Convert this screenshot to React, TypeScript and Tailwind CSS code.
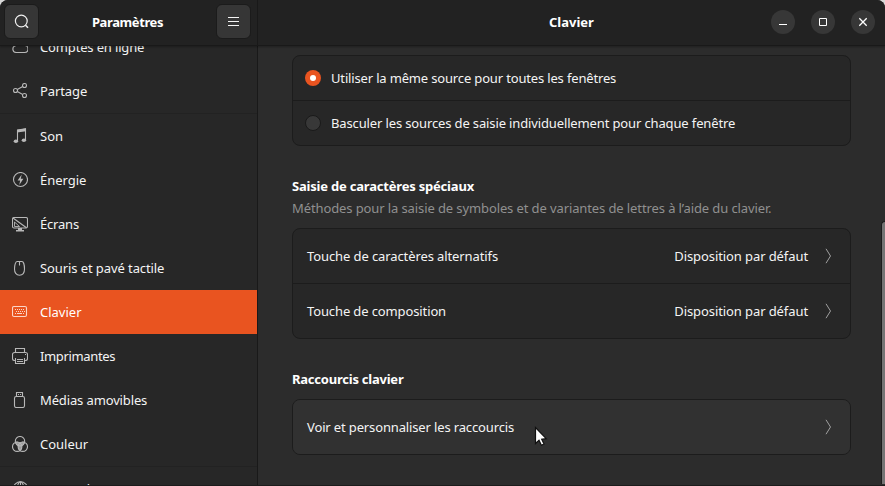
import type { ReactNode } from "react";

function Icon({ children }: { children: ReactNode }) {
  return (
    <svg width="16" height="16" viewBox="0 0 16 16" fill="none" stroke="currentColor" strokeWidth="1.100" className="shrink-0">
      {children}
    </svg>
  );
}

const cloud = <path d="M4 13.500a3.500 3.500 0 0 1-.4-6.900A4.600 4.600 0 0 1 12.500 6.500a3.500 3.500 0 0 1 0 7z" />;
const share = (
  <>
    <circle cx="3.500" cy="7.500" r="2" />
    <circle cx="12.500" cy="2.500" r="2" />
    <circle cx="12.500" cy="12.500" r="2" />
    <path d="M5.300 6.500l5.400-3M5.300 8.500l5.400 3" />
  </>
);
const music = (
  <>
    <path d="M5.500 13V2.500l8-1.500v11" />
    <path d="M5 1.500L14 .3v3L5 4.500z" fill="currentColor" stroke="none" />
    <ellipse cx="3.900" cy="13.200" rx="2.200" ry="1.800" fill="currentColor" stroke="none" />
    <ellipse cx="11.900" cy="12.200" rx="2.200" ry="1.800" fill="currentColor" stroke="none" />
  </>
);
const power = (
  <>
    <circle cx="8.500" cy="7.500" r="7" />
    <path d="M9.700 2.500L5.600 8.500h2.500l-.8 4.500 4.100-6.200H8.800z" fill="currentColor" stroke="none" />
  </>
);
const screen = (
  <>
    <rect x="0.500" y="1.500" width="15" height="10.500" rx="1.500" />
    <path d="M1 2l13.500 9.700" />
    <path d="M2.500 6v4.500h5z" strokeWidth="0.900" />
    <path d="M6 12h4v2h2v1.500H4V14h2z" fill="currentColor" stroke="none" />
  </>
);
const mouse = (
  <>
    <path d="M5 1.500h5c1.500 0 2.500 4 2.500 7.500s-1.600 6.200-5 6.200-5-2.700-5-6.200S3.500 1.500 5 1.500z" />
    <path d="M7.500 1.500v4" />
  </>
);
const keyboard = (
  <>
    <rect x="0.500" y="2.500" width="14" height="10" rx="1.500" />
    <path d="M3 5.500h1M5 5.500h1M7 5.500h1M9 5.500h1M11 5.500h1M4 7.500h1M6 7.500h1M8 7.500h1M10 7.500h1M12 7.500h1" strokeWidth="1" />
    <path d="M3 9.500h1M5 9.500h5M11 9.500h1" strokeWidth="1" />
  </>
);
const printer = (
  <>
    <path d="M3.500 4V.5h9V4M3 12.500h-.5a2 2 0 0 1-2-2V6.500a2 2 0 0 1 2-2h11a2 2 0 0 1 2 2v4a2 2 0 0 1-2 2H13" />
    <path d="M3.500 10v5.500h9V10M5 11.500h6M5 13.500h6M13 6.500h1" />
  </>
);
const usb = (
  <>
    <rect x="2.500" y="4.500" width="10" height="11" rx="1.800" />
    <path d="M4.500 4V.5h6V4" />
    <path d="M6 2.500h1M8 2.500h1" />
  </>
);
const color = (
  <>
    <g fill="currentColor" stroke="none" opacity=".8">
      <ellipse cx="6.600" cy="7.950" rx="3.550" ry="1.700" transform="rotate(27 6.600 7.950)" />
      <ellipse cx="9.400" cy="7.950" rx="3.550" ry="1.700" transform="rotate(-27 9.400 7.950)" />
      <ellipse cx="8" cy="10.700" rx="1.900" ry="3.800" />
    </g>
    <circle cx="8" cy="5.200" r="4.700" />
    <circle cx="5.200" cy="10.700" r="4.700" />
    <circle cx="10.800" cy="10.700" r="4.700" />
  </>
);
const globe = (
  <>
    <circle cx="8.500" cy="8" r="7.200" />
    <ellipse cx="8.500" cy="8" rx="3.300" ry="7.200" />
    <path d="M1.700 5h13.600M8.500 1v14M1.700 11h13.600" />
  </>
);

function Entry({ icon, label, tracking = "", active = false }: { icon: ReactNode; label: string; tracking?: string; active?: boolean }) {
  return (
    <div className={`flex h-11 shrink-0 items-center gap-3 pl-3 ${active ? "bg-[#e95420] text-white" : ""}`}>
      <span className={`flex ${active ? "text-[#fbd5c8]" : "text-[#b8b8b8]"}`}>
        <Icon>{icon}</Icon>
      </span>
      <span className={`whitespace-nowrap ${tracking}`}>{label}</span>
    </div>
  );
}

function Chevron() {
  return (
    <svg width="8" height="16" viewBox="0 0 8 16" fill="none" stroke="#a0a0a0" className="ml-[17px] shrink-0">
      <path d="M1 .8L5.500 8 1 15.200" />
    </svg>
  );
}

function Row({ label, value, tracking = "", hover = false }: { label: string; value?: string; tracking?: string; hover?: boolean }) {
  return (
    <div className={`box-content flex h-[54px] items-center pl-3.5 pr-[17px] ${hover ? "bg-[#313131]" : ""}`}>
      <span className={`whitespace-nowrap ${tracking}`}>{label}</span>
      <span className="ml-auto whitespace-nowrap tracking-[-0.09px]">{value}</span>
      <Chevron />
    </div>
  );
}

const card = "overflow-hidden rounded-lg border border-[#1c1c1c] bg-[#272727] divide-y divide-[#1c1c1c]";
const windowButton = "flex size-6 items-center justify-center rounded-full bg-[#373737]";

export default function App() {
  return (
    <div className="h-[486px] w-[885px] overflow-hidden bg-[#d8d8d8] font-['Noto_Sans',sans-serif] text-[13px] leading-5 text-[#f4f4f4]">
      <div className="relative flex h-full flex-col overflow-hidden rounded-t-lg border-b border-[#1c1c1c] bg-[#2c2c2c]">
        <header className="relative z-10 flex h-[46px] shrink-0 border-b border-[#191919] bg-[#222222] shadow-[0_1px_2px_rgba(0,0,0,0.3)]">
          <div className="flex w-[258px] items-center justify-between border-r border-[#191919] px-1 pb-0.5">
            <button className="flex size-[35px] items-center justify-center rounded-md border border-[#1b1b1b] bg-[#363636]">
              <svg width="16" height="16" viewBox="0 0 16 16" fill="none" stroke="#f0f0f0" strokeWidth="1.200">
                <circle cx="7.300" cy="7" r="5.900" />
                <path d="M11.500 11.200l2.500 2.500" strokeWidth="1.600" />
              </svg>
            </button>
            <h1 className="font-bold tracking-[-0.4px] text-white">Paramètres</h1>
            <button className="mr-0.5 flex size-[35px] items-center justify-center rounded-md border border-[#1b1b1b] bg-[#363636]">
              <svg width="11" height="12" viewBox="0 0 11 12" stroke="#f4f4f4">
                <path d="M0 1.500h11M0 5.500h11M0 9.500h11" />
              </svg>
            </button>
          </div>
          <div className="flex flex-1 items-center pb-0.5">
            <h2 className="ml-[291px] flex-1 font-bold text-white">Clavier</h2>
            <div className="mr-[10px] flex gap-4">
              <button className={windowButton}>
                <svg width="10" height="10" viewBox="0 0 10 10" stroke="white"><path d="M1 7.500h8" /></svg>
              </button>
              <button className={windowButton}>
                <svg width="10" height="10" viewBox="0 0 10 10" fill="none" stroke="white"><path d="M1.500 1.500h7v7h-7z" /></svg>
              </button>
              <button className={windowButton}>
                <svg width="10" height="10" viewBox="0 0 10 10" stroke="white" strokeWidth="1.300"><path d="M1.300 1.300l7.400 7.400M8.700 1.300l-7.400 7.400" /></svg>
              </button>
            </div>
          </div>
        </header>
        <div className="flex min-h-0 flex-1">
          <nav className="w-[258px] shrink-0 overflow-hidden border-r border-[#191919] bg-[#272727]">
            <div className="-mt-[21px] flex flex-col">
              <Entry icon={cloud} label="Comptes en ligne" tracking="tracking-[-0.15px]" />
              <Entry icon={share} label="Partage" tracking="tracking-[-0.1px]" />
              <div className="h-px shrink-0 bg-[#222222]" />
              <Entry icon={music} label="Son" />
              <Entry icon={power} label="Énergie" tracking="tracking-[-0.04px]" />
              <Entry icon={screen} label="Écrans" tracking="tracking-[-0.2px]" />
              <Entry icon={mouse} label="Souris et pavé tactile" tracking="tracking-[-0.09px]" />
              <Entry icon={keyboard} label="Clavier" active />
              <Entry icon={printer} label="Imprimantes" tracking="tracking-[-0.36px]" />
              <Entry icon={usb} label="Médias amovibles" tracking="tracking-[-0.13px]" />
              <Entry icon={color} label="Couleur" />
              <div className="h-px shrink-0 bg-[#222222]" />
              <Entry icon={globe} label="Pays et langue" />
            </div>
          </nav>
          <main className="flex min-w-0 flex-1">
            <div className="ml-[34px] w-[559px] shrink-0 pt-[9px]">
              <section className={card}>
                <div className="flex h-[45px] items-center gap-2.5 pl-3">
                  <span className="flex size-4 items-center justify-center rounded-full bg-[#e95420]">
                    <span className="size-1.5 rounded-full bg-white" />
                  </span>
                  <span className="whitespace-nowrap tracking-[-0.16px]">Utiliser la même source pour toutes les fenêtres</span>
                </div>
                <div className="flex h-11 items-center gap-2.5 pl-3">
                  <span className="size-4 rounded-full border border-[#1a1a1a] bg-[#383838]" />
                  <span className="whitespace-nowrap tracking-[-0.135px]">Basculer les sources de saisie individuellement pour chaque fenêtre</span>
                </div>
              </section>
              <h3 className="mt-[30px] font-bold tracking-[-0.2px] text-white">Saisie de caractères spéciaux</h3>
              <p className="mt-0.5 whitespace-nowrap text-[#909090]">
                <span className="tracking-[-0.107px]">Méthodes pour la saisie de symboles et de variantes de lettres à l’aide du clavier.</span>
              </p>
              <section className={`mt-2.5 ${card}`}>
                <Row label="Touche de caractères alternatifs" value="Disposition par défaut" tracking="tracking-[-0.1px]" />
                <Row label="Touche de composition" value="Disposition par défaut" tracking="tracking-[-0.12px]" />
              </section>
              <h3 className="mt-[30px] font-bold tracking-[-0.23px] text-white">Raccourcis clavier</h3>
              <section className={`mt-2.5 ${card}`}>
                <Row label="Voir et personnaliser les raccourcis" tracking="tracking-[-0.14px]" hover />
              </section>
            </div>
            <div className="ml-auto mt-[175px] h-[263px] w-1 rounded-tl-sm border-l border-t border-[#1c1c1c] bg-[#747474]" />
          </main>
        </div>
        <svg width="16" height="22" viewBox="0 0 16 22" className="absolute left-[534px] top-[426px] z-20">
          <path d="M1.500 1.500v16l3.500-3.300 2.400 5 2.600-1.200-2.300-4.800 4.500-.5z" fill="white" stroke="#111111" strokeWidth="1.200" />
        </svg>
      </div>
    </div>
  );
}
